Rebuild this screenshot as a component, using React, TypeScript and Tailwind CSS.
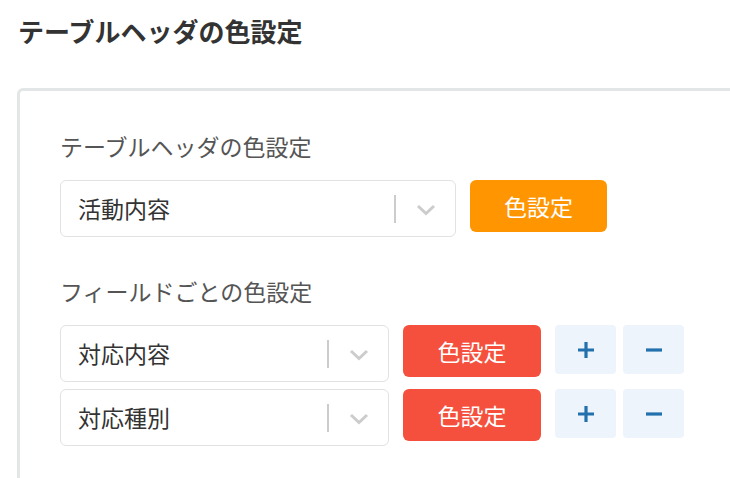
import { useState } from 'react';

const font = { fontFamily: '"Noto Sans CJK JP", "Noto Sans", sans-serif' };

type Field = { id: number; name: string };

function Chevron() {
    return (
        <svg width="20" height="12" viewBox="0 0 20 12" fill="none">
            <path d="M2 2 L10 9.5 L18 2" stroke="#cccccc" strokeWidth="3" />
        </svg>
    );
}

function SelectBox({ value, width }: { value: string; width: string }) {
    return (
        <div className={`${width} h-[57px] flex items-center border border-[#e2e2e2] rounded-[6px] bg-white`}>
            <span className="flex-1 pl-[17px] text-[23px] text-[#333]">{value}</span>
            <span className="w-[2px] h-[28px] bg-[#cccccc]"></span>
            <span className="w-[59px] flex items-center justify-center pt-[2px]">
                <Chevron />
            </span>
        </div>
    );
}

function App() {
    const [fields] = useState<Field[]>([
        { id: 1, name: "対応内容" },
        { id: 2, name: "対応種別" },
    ]);

    return (
        <div className="w-[730px] h-[478px] overflow-hidden bg-white text-[#333]" style={font}>
            <h1 className="pl-[18px] pt-[12px] text-[26px] font-bold leading-[38px] text-[#333]">テーブルヘッダの色設定</h1>

            <div className="ml-[17px] mt-[38px] w-[760px] h-[420px] border-l-[3px] border-t-[3px] border-[#e3e6e6] rounded-tl-[6px] pl-10 pt-[38px]">
                <p className="text-[23px] leading-[34px] text-[#555]">テーブルヘッダの色設定</p>
                <div className="mt-[17px] flex items-start gap-[14px]">
                    <SelectBox value="活動内容" width="w-[396px]" />
                    <button className="w-[137px] h-[52px] rounded-[6px] bg-[#ff9500] text-white text-[23px]">色設定</button>
                </div>

                <p className="mt-[37px] text-[23px] leading-[34px] text-[#555]">フィールドごとの色設定</p>
                <div className="mt-[17px] flex flex-col gap-[7px]">
                    {fields.map((f) => (
                        <div key={f.id} className="flex items-start">
                            <SelectBox value={f.name} width="w-[329px]" />
                            <button className="ml-[14px] w-[138px] h-[52px] rounded-[6px] bg-[#f5503e] text-white text-[23px]">色設定</button>
                            <button className="ml-[14px] w-[61px] h-[49px] rounded-[4px] bg-[#edf4fb] flex items-center justify-center">
                                <svg width="18" height="18" viewBox="0 0 18 18">
                                    <path d="M9 1 V17 M1 9 H17" stroke="#2270ad" strokeWidth="3.2" />
                                </svg>
                            </button>
                            <button className="ml-[7px] w-[61px] h-[49px] rounded-[4px] bg-[#edf4fb] flex items-center justify-center">
                                <svg width="18" height="18" viewBox="0 0 18 18">
                                    <path d="M1 9 H17" stroke="#2270ad" strokeWidth="3.2" />
                                </svg>
                            </button>
                        </div>
                    ))}
                </div>
            </div>
        </div>
    );
}

export default App
